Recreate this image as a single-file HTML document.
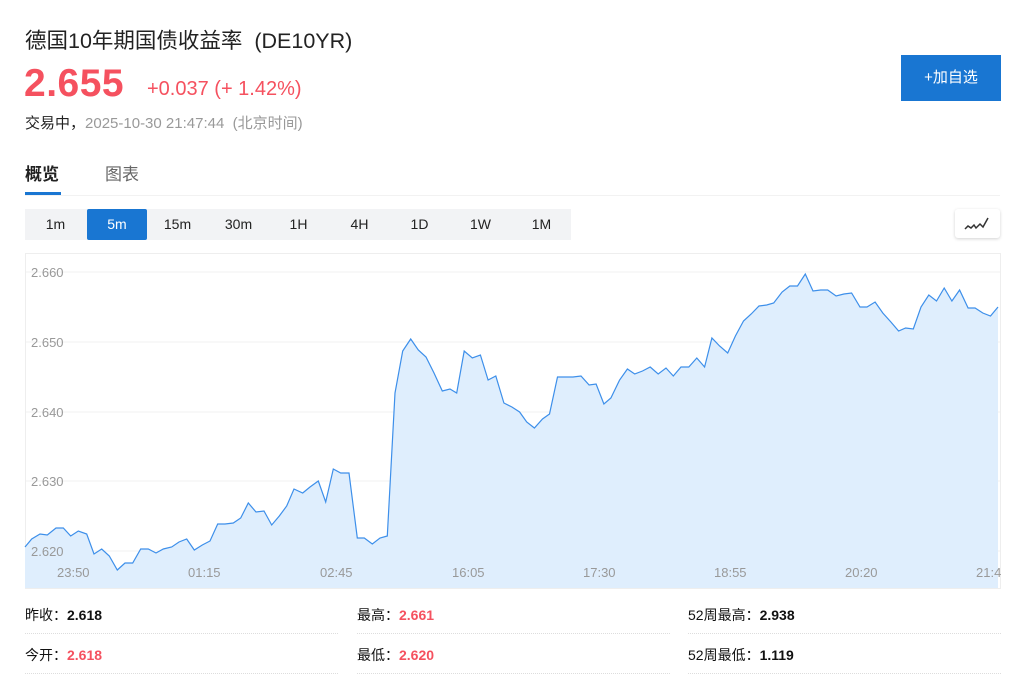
<!DOCTYPE html>
<html><head><meta charset="utf-8"><style>
*{margin:0;padding:0;box-sizing:border-box}
body{width:1024px;height:700px;background:#fff;font-family:"Liberation Sans","Noto Sans CJK SC",sans-serif;position:relative;overflow:hidden;color:#222}
.a{position:absolute;white-space:nowrap}
.red{color:#f5515f}
.tf{position:absolute;top:209px;height:31px;width:61px;text-align:center;line-height:31px;font-size:14px;color:#222}
.st{position:absolute;font-size:14px;font-weight:bold;color:#111}
.ln{position:absolute;height:0;border-top:1px dotted #ddd;width:313px}
</style></head><body>
<div class="a" style="left:25px;top:24px;font-size:21.5px;color:#222">德国10年期国债收益率 &nbsp;(DE10YR)</div>
<div class="a red" style="left:24px;top:62px;font-size:39px;font-weight:bold;letter-spacing:0.5px">2.655</div>
<div class="a red" style="left:147px;top:78px;font-size:20px">+0.037 (+ 1.42%)</div>
<div class="a" style="left:25px;top:112px;font-size:15px;color:#222">交易中，<span style="color:#999">2025-10-30 21:47:44 &nbsp;(北京时间)</span></div>
<div class="a" style="left:901px;top:55px;width:100px;height:46px;background:#1976d2;color:#fff;font-size:15px;text-align:center;line-height:46px">+加自选</div>
<div class="a" style="left:25px;top:160px;font-size:17px;font-weight:bold;color:#222">概览</div>
<div class="a" style="left:105px;top:160px;font-size:17px;color:#666">图表</div>
<div class="a" style="left:25px;top:195px;width:975px;border-top:1px solid #f2f2f2"></div>
<div class="a" style="left:25px;top:192px;width:36px;height:3px;background:#1976d2"></div>
<div class="a" style="left:25px;top:209px;width:546px;height:31px;background:#f2f3f5"></div>
<div class="tf" style="left:25px">1m</div>
<div class="tf" style="left:87px;width:60px;background:#1976d2;color:#fff;border-radius:2px">5m</div>
<div class="tf" style="left:147px">15m</div>
<div class="tf" style="left:208px">30m</div>
<div class="tf" style="left:268px">1H</div>
<div class="tf" style="left:329px">4H</div>
<div class="tf" style="left:389px">1D</div>
<div class="tf" style="left:450px">1W</div>
<div class="tf" style="left:511px">1M</div>
<div class="a" style="left:955px;top:209px;width:45px;height:29px;background:#fff;border-radius:3px;box-shadow:0 1px 3px rgba(0,0,0,0.18)">
<svg width="45" height="29"><polyline points="10,20 13,17 16,19 19,16 21,19 25,15 28,18 33,9" fill="none" stroke="#333" stroke-width="1.5"/></svg></div>
<svg class="a" style="left:0;top:0" width="1024" height="700">
<rect x="25.5" y="253.5" width="975" height="335" fill="none" stroke="#eee"/>
<g stroke="#f0f0f0" stroke-width="1">
<line x1="26" y1="272" x2="1000" y2="272"/><line x1="26" y1="342" x2="1000" y2="342"/><line x1="26" y1="412" x2="1000" y2="412"/><line x1="26" y1="481" x2="1000" y2="481"/><line x1="26" y1="551" x2="1000" y2="551"/></g>
<g font-family="Liberation Sans,sans-serif" font-size="13" fill="#999">
<text x="31" y="277">2.660</text><text x="31" y="347">2.650</text><text x="31" y="417">2.640</text><text x="31" y="486">2.630</text></g>
<polygon fill="#dfeefd" points="25,588 25,547 31.7,539 40,534 47.3,535 56,528 63.3,528 70.7,536 78.3,531 86.7,534 94,554 101.7,549 109.3,556 117.3,570 125,563 132.7,563 140.7,549 148.3,549 156,553 163.3,549 171.7,547 179,542 186.7,539 194.3,550 202.3,545 210,541 217.7,524 225,524 233.3,523 240.7,518 248.3,503 256,512 264,511 271.7,525 279.3,516 286.7,506 294,489 302.7,493 310,487 318.3,481 325.7,502 333.3,469 340.7,473 349,473 357.3,538 364.3,538 372.3,544 380,538 387.3,536 395,393 402.7,351 410.7,339 418.3,350 426,357 434,373 442.3,391 450,389 456.7,393 464.2,351 472.3,358 480.4,355 488.1,380 495.8,376 503.9,403 511.9,407 519.6,412 526.7,422 534.4,428 542.5,419 549.5,414 557.5,377 565.3,377 573,377 581,376 589.1,385 596.1,384 603.9,404 610.9,398 619.6,380 627.4,369 634.7,374 642.5,371 650.2,367 658.2,374 666,368 673.3,376 681,367 688.8,367 696.8,358 704.6,367 711.9,338 719.6,346 727.7,353 735.4,336 743.5,321 751.2,314 759,306 766.7,305 773.7,303 782.1,292 789.8,286 797.5,286 805.3,274 813,291 820.7,290 827.7,290 836.1,296 843.9,294 851.6,293 860,307 867,307 875.1,302 882.8,313 890.9,322 898.6,331 905.6,328 913.3,329 921,307 928.8,295 936.5,301 944.2,288 951.9,301 959.6,290 968.1,308 975.1,308 982.8,313 990.5,316 998,307 998,588"/>
<polyline fill="none" stroke="#3d8fea" stroke-width="1.2" points="25,547 31.7,539 40,534 47.3,535 56,528 63.3,528 70.7,536 78.3,531 86.7,534 94,554 101.7,549 109.3,556 117.3,570 125,563 132.7,563 140.7,549 148.3,549 156,553 163.3,549 171.7,547 179,542 186.7,539 194.3,550 202.3,545 210,541 217.7,524 225,524 233.3,523 240.7,518 248.3,503 256,512 264,511 271.7,525 279.3,516 286.7,506 294,489 302.7,493 310,487 318.3,481 325.7,502 333.3,469 340.7,473 349,473 357.3,538 364.3,538 372.3,544 380,538 387.3,536 395,393 402.7,351 410.7,339 418.3,350 426,357 434,373 442.3,391 450,389 456.7,393 464.2,351 472.3,358 480.4,355 488.1,380 495.8,376 503.9,403 511.9,407 519.6,412 526.7,422 534.4,428 542.5,419 549.5,414 557.5,377 565.3,377 573,377 581,376 589.1,385 596.1,384 603.9,404 610.9,398 619.6,380 627.4,369 634.7,374 642.5,371 650.2,367 658.2,374 666,368 673.3,376 681,367 688.8,367 696.8,358 704.6,367 711.9,338 719.6,346 727.7,353 735.4,336 743.5,321 751.2,314 759,306 766.7,305 773.7,303 782.1,292 789.8,286 797.5,286 805.3,274 813,291 820.7,290 827.7,290 836.1,296 843.9,294 851.6,293 860,307 867,307 875.1,302 882.8,313 890.9,322 898.6,331 905.6,328 913.3,329 921,307 928.8,295 936.5,301 944.2,288 951.9,301 959.6,290 968.1,308 975.1,308 982.8,313 990.5,316 998,307"/>
<g font-family="Liberation Sans,sans-serif" font-size="13" fill="#999">
<text x="31" y="556">2.620</text>
<text x="57" y="577">23:50</text><text x="188" y="577">01:15</text><text x="320" y="577">02:45</text><text x="452" y="577">16:05</text><text x="583" y="577">17:30</text><text x="714" y="577">18:55</text><text x="845" y="577">20:20</text><text x="976" y="577">21:4</text></g>
</svg>
<div class="st" style="left:25px;top:605px"><span style="font-weight:normal">昨收：</span>2.618</div>
<div class="st" style="left:357px;top:605px"><span style="font-weight:normal">最高：</span><span class="red">2.661</span></div>
<div class="st" style="left:688px;top:605px"><span style="font-weight:normal">52周最高：</span>2.938</div>
<div class="st" style="left:25px;top:645px"><span style="font-weight:normal">今开：</span><span class="red">2.618</span></div>
<div class="st" style="left:357px;top:645px"><span style="font-weight:normal">最低：</span><span class="red">2.620</span></div>
<div class="st" style="left:688px;top:645px"><span style="font-weight:normal">52周最低：</span>1.119</div>
<div class="ln" style="left:25px;top:633px"></div><div class="ln" style="left:357px;top:633px"></div><div class="ln" style="left:688px;top:633px"></div>
<div class="ln" style="left:25px;top:673px"></div><div class="ln" style="left:357px;top:673px"></div><div class="ln" style="left:688px;top:673px"></div>
</body></html>
